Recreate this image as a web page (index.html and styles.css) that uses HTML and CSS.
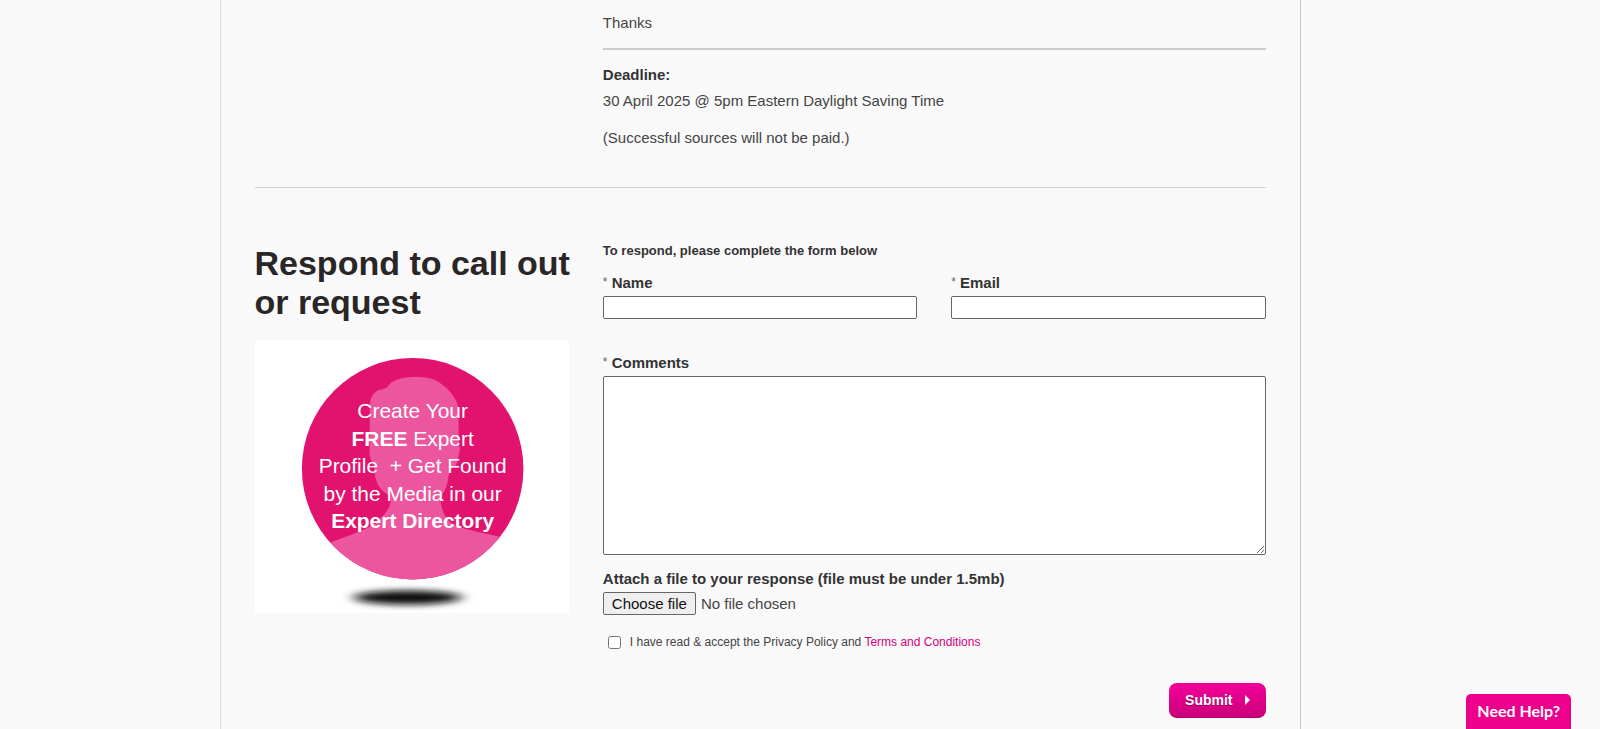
FILE: index.html
```html
<!DOCTYPE html>
<html lang="en">
<head>
    <meta charset="UTF-8">
    <meta name="viewport" content="width=device-width, initial-scale=1.0">
    <title>Respond to call out or request</title>
    <link rel="stylesheet" href="styles.css">
</head>
<body>
    <main class="page">
        <!-- End of the call out -->
        <section class="row callout">
            <div class="main-col">
                <p class="thanks">Thanks</p>
                <div class="deadline">
                    <h3>Deadline:</h3>
                    <p>30 April 2025 @ 5pm Eastern Daylight Saving Time</p>
                    <p class="note">(Successful sources will not be paid.)</p>
                </div>
            </div>
        </section>

        <!-- Response form -->
        <section class="row respond">
            <div class="side-col">
                <h1>Respond to call out<br>or request</h1>
                <a href="#" class="promo">
                    <svg viewBox="0 0 315 274" role="img" aria-label="Create your free expert profile">
                        <defs>
                            <clipPath id="disc"><circle cx="158" cy="129" r="111"/></clipPath>
                            <filter id="soft" x="-30%" y="-150%" width="160%" height="400%">
                                <feGaussianBlur stdDeviation="7 3"/>
                            </filter>
                        </defs>
                        <rect width="315" height="274" fill="#fff"/>
                        <ellipse cx="153" cy="258" rx="54" ry="7" fill="#111" filter="url(#soft)"/>
                        <circle cx="158" cy="129" r="111" fill="#e2136e"/>
                        <path clip-path="url(#disc)" fill="#eb569f" d="M158 37 C148 37 139 40 135 44 C132 49 129 49 124 50 C118 53 115 58 115 67 L115 96 C113 99 115 103 115 108 C114 116 116 120 119 126 C120 136 121 143 126 149 C130 154 135 154 136 162 C134 172 128 176 120 184 C112 190 92 197 75 203 L40 215 L40 250 L270 250 L270 205 L244 197 C228 193 206 190 196 183 C189 177 186 168 186 157 C191 151 193 145 194 136 C195 131 196 128 200 127 C204 124 203 117 205 112 C206 107 204 104 204 99 L204 72 C204 58 193 48 184 42 C176 37 167 37 158 37 Z"/>
                        <g class="promo-text">
                            <text x="158" y="78">Create Your</text>
                            <text x="158" y="106"><tspan class="strong">FREE</tspan> Expert</text>
                            <text x="158" y="133">Profile&nbsp; + Get Found</text>
                            <text x="158" y="161">by the Media in our</text>
                            <text x="158" y="188" class="strong">Expert Directory</text>
                        </g>
                    </svg>
                </a>
            </div>

            <form class="main-col" action="#" method="post">
                <h2>To respond, please complete the form below</h2>
                <div class="fields">
                    <div class="field">
                        <label for="name"><sup>*</sup> Name</label>
                        <input type="text" id="name" name="name">
                    </div>
                    <div class="field">
                        <label for="email"><sup>*</sup> Email</label>
                        <input type="text" id="email" name="email">
                    </div>
                </div>
                <div class="field">
                    <label for="comments"><sup>*</sup> Comments</label>
                    <textarea id="comments" name="comments"></textarea>
                </div>
                <div class="field attach">
                    <label for="attachment">Attach a file to your response (file must be under 1.5mb)</label>
                    <div class="file-row">
                        <button type="button" id="attachment" class="file-button">Choose file</button>
                        <span>No file chosen</span>
                    </div>
                </div>
                <div class="terms">
                    <input type="checkbox" id="terms" name="terms">
                    <label for="terms">I have read &amp; accept the Privacy Policy and <a href="#">Terms and Conditions</a></label>
                </div>
                <div class="actions">
                    <button type="submit" class="submit">Submit
                        <svg width="5" height="10" viewBox="0 0 5 10" aria-hidden="true"><path d="M0 0 L5 5 L0 10 Z" fill="#fff"/></svg>
                    </button>
                </div>
            </form>
        </section>
    </main>

    <button type="button" class="help">Need Help?</button>
</body>
</html>
```
FILE: styles.css
```css
* {
    box-sizing: border-box;
}
body {
    margin: 0;
    padding-right: 80px;
    background-color: #f9f9f9;
    color: #444;
    font-family: "Liberation Sans", Arial, sans-serif;
    font-size: 15px;
    line-height: 20px;
    overflow: hidden;
}
h1, h2, h3, p {
    margin: 0;
}
.page {
    max-width: 1081px;
    min-height: 100vh;
    margin: 0 auto;
    padding: 0 34px;
    border-left: 1px solid #ddd;
    border-right: 1px solid #ccc;
}
.row {
    display: grid;
    grid-template-columns: repeat(3, minmax(0, 1fr));
    column-gap: 34px;
}
.main-col {
    grid-column: 2 / 4;
}

/* call out */
.callout {
    padding: 13px 0 39px;
    border-bottom: 1px solid #d2d2d2;
}
.thanks {
    padding-bottom: 15px;
    border-bottom: 2px solid #ccc;
}
.deadline {
    padding-top: 15px;
}
.deadline h3 {
    color: #333;
    font-size: 15px;
    line-height: 20px;
    margin-bottom: 6px;
}
.deadline .note {
    margin-top: 17px;
}

/* respond */
.respond {
    padding: 53px 0 12px;
}
h1 {
    padding-top: 3px;
    color: #2a2627;
    font-size: 34px;
    line-height: 39px;
    white-space: nowrap;
}
.promo {
    display: block;
    margin-top: 18px;
}
.promo svg {
    display: block;
    width: 100%;
}
.promo-text {
    fill: #fff;
    font-size: 21px;
    text-anchor: middle;
}
.strong {
    font-weight: bold;
}
h2 {
    color: #333;
    font-size: 13px;
    line-height: 20px;
    margin-bottom: 12px;
}
.fields {
    display: grid;
    grid-template-columns: 1fr 1fr;
    column-gap: 34px;
    margin-bottom: 34px;
}
.field label {
    display: block;
    margin-bottom: 3px;
    color: #333;
    font-weight: bold;
}
.field sup {
    color: #666;
    font-size: 12px;
    font-weight: normal;
    line-height: 0;
    vertical-align: 2px;
}
.field input,
.field textarea {
    display: block;
    width: 100%;
    height: 23px;
    border: 1px solid #666;
    border-radius: 2px;
    background-color: #fff;
    font: inherit;
}
.field textarea {
    height: 179px;
    resize: both;
}
.attach {
    margin-top: 14px;
}
.file-row {
    display: flex;
    align-items: center;
    gap: 5px;
}
.file-button {
    height: 23px;
    padding: 0 8px;
    border: 1px solid #666;
    border-radius: 2px;
    background-color: #efefef;
    color: #111;
    font: inherit;
}
.terms {
    display: flex;
    align-items: center;
    gap: 9px;
    margin-top: 17px;
    font-size: 12px;
}
.terms input {
    width: 13px;
    height: 13px;
    margin: 0 0 0 5px;
}
.terms a {
    color: #d5007f;
    text-decoration: none;
}
.actions {
    display: flex;
    justify-content: flex-end;
    margin-top: 31px;
}
.submit {
    display: flex;
    align-items: center;
    gap: 12px;
    height: 35px;
    padding: 0 16px;
    border: 0;
    border-bottom: 1px solid #b0006c;
    border-radius: 8px;
    background: linear-gradient(#f2009a, #cc007a);
    color: #fff;
    font: bold 14px "Liberation Sans", Arial, sans-serif;
    text-shadow: 0 1px 1px #90005a;
}

/* help tab pinned to the bottom of the window */
.help {
    position: fixed;
    right: 29px;
    bottom: 0;
    height: 35px;
    padding: 0 11px 2px;
    border: 0;
    border-radius: 5px 5px 0 0;
    background-color: #ec008c;
    color: #fff;
    font: bold 16px Lato, "Liberation Sans", sans-serif;
}
```
